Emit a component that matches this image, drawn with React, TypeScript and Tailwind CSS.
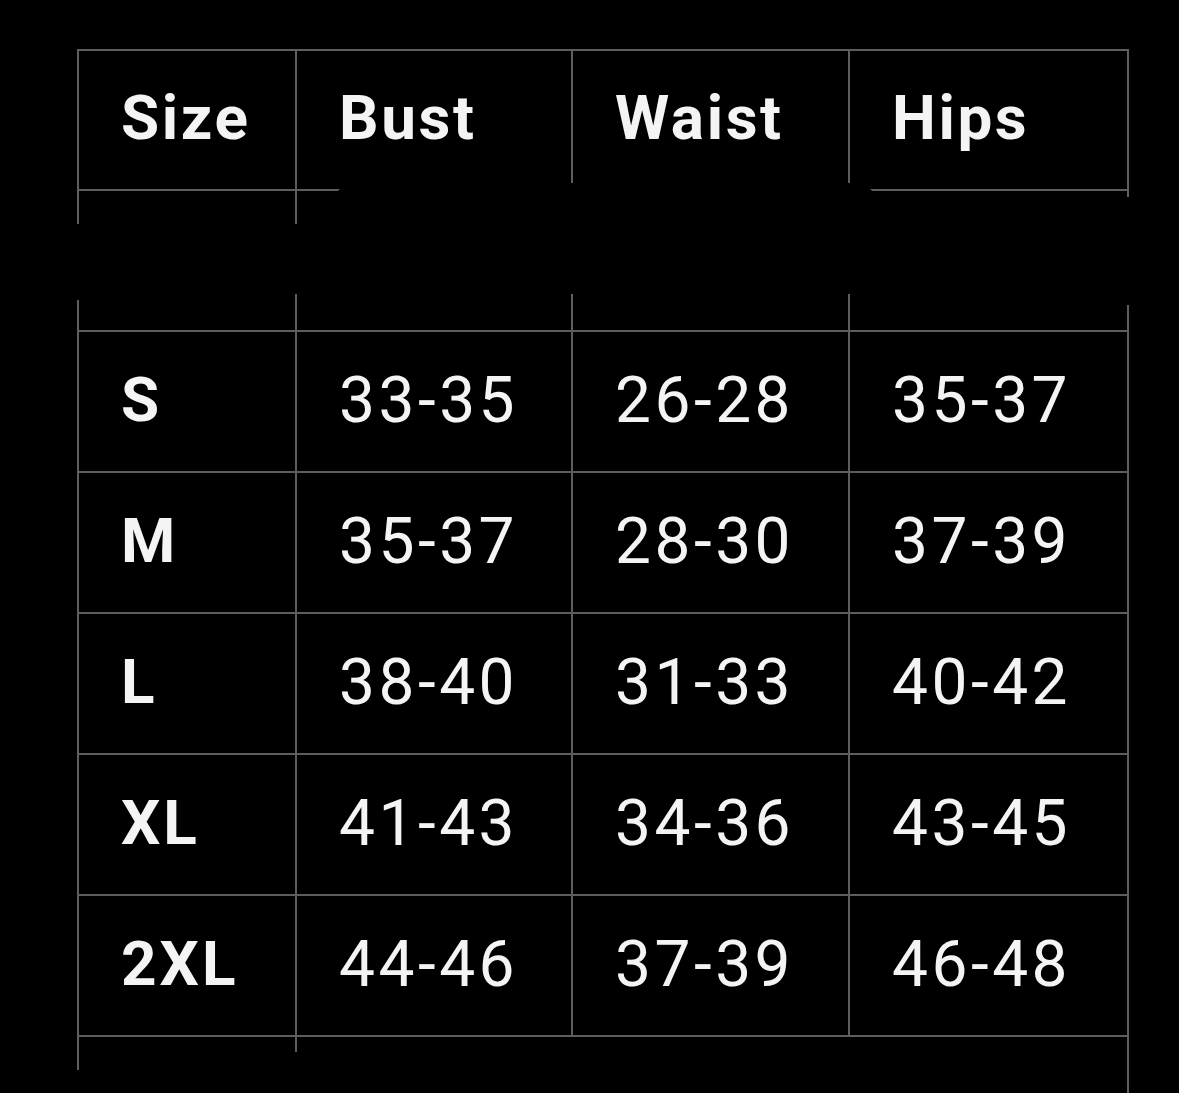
import React from "react";

const rows = [
  ["S", "33-35", "26-28", "35-37"],
  ["M", "35-37", "28-30", "37-39"],
  ["L", "38-40", "31-33", "40-42"],
  ["XL", "41-43", "34-36", "43-45"],
  ["2XL", "44-46", "37-39", "46-48"],
];

const cols = ["Size", "Bust", "Waist", "Hips"];

function Cell({ children, last, bold }: { children?: React.ReactNode; last?: boolean; bold?: boolean }) {
  return (
    <div
      className={`h-[141px] border-t-2 border-l-2 border-[#5e5e5e] flex items-center pl-[42px] text-[#f4f4f4] ${
        last ? "border-r-2" : ""
      } ${bold ? "font-bold text-[62px] tracking-[3px] pb-[4px]" : "text-[64px] tracking-[3.5px] pb-[1px]"}`}
    >
      {children}
    </div>
  );
}

export default function App() {
  return (
    <div
      className="relative w-[1179px] h-[1093px] bg-black overflow-hidden"
      style={{ fontFamily: "Roboto, 'Liberation Sans', sans-serif" }}
    >
      <div className="pl-[77px] pt-[49px]">
        <div className="grid grid-cols-[218px_276px_277px_281px] w-fit">
          {cols.map((c, i) => (
            <div
              key={c}
              className={`h-[140px] border-t-2 border-l-2 border-[#5e5e5e] flex items-center pl-[42px] pb-[6px] text-[#f4f4f4] font-bold text-[62px] tracking-[2.6px] ${
                i === 3 ? "border-r-2" : ""
              }`}
            >
              {c}
            </div>
          ))}
          {cols.map((c, i) => (
            <Cell key={"blank" + c} last={i === 3} />
          ))}
          {rows.map((r) =>
            r.map((v, i) => (
              <Cell key={r[0] + i} last={i === 3} bold={i === 0}>
                {v}
              </Cell>
            ))
          )}
          <div className="h-[35px] border-t-2 border-l-2 border-[#5e5e5e]" />
          <div className="h-[17px] border-t-2 border-l-2 border-[#5e5e5e]" />
          <div className="h-[17px] border-t-2 border-[#5e5e5e]" />
          <div className="h-[60px] border-t-2 border-r-2 border-[#5e5e5e]" />
        </div>
      </div>

      {/* black patch covering the second row */}
      <div className="absolute left-[50px] top-[224px] w-[1129px] h-[70px] bg-black rounded-tr-[60px]" />
      <div className="absolute left-[328px] top-[183px] w-[554px] h-[50px] bg-black rounded-t-[30px]" />
      <div className="absolute left-[1100px] top-[197px] w-[79px] h-[108px] bg-black" />
      <div className="absolute left-[60px] top-[290px] w-[30px] h-[10px] bg-black" />
    </div>
  );
}
